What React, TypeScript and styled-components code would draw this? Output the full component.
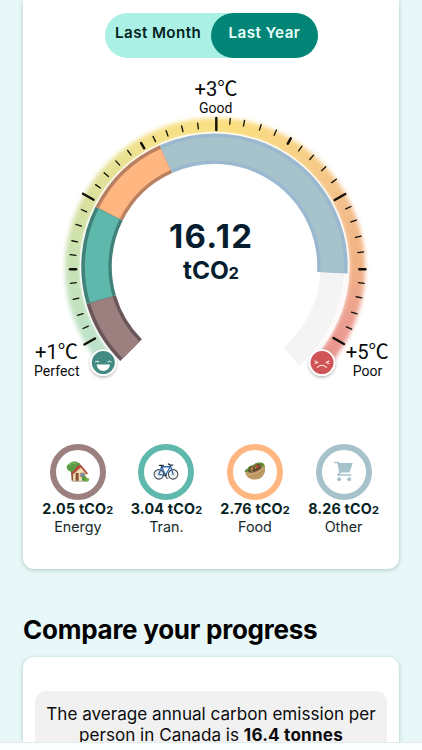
import React from 'react';
import styled, { createGlobalStyle } from 'styled-components';

const GlobalStyle = createGlobalStyle`
  * { box-sizing: border-box; }
  body { margin: 0; background: #e8f7f7; font-family: Inter, sans-serif; }
`;

const Page = styled.main`
  width: 422px;
  height: 750px;
  overflow: hidden;
  display: flex;
  flex-direction: column;
  background: #e8f7f7;
`;

const Content = styled.div`
  flex: 1;
  min-height: 0;
  overflow: hidden;
  padding: 0 23px;
`;

const Card = styled.section<{ $continued?: boolean }>`
  width: 376px;
  background: #fff;
  border-radius: ${(p) => (p.$continued ? '0 0 11px 11px' : '11px')};
  box-shadow: 0 1px 4px rgba(20, 60, 60, 0.26);
`;

const SummaryCard = styled(Card)`
  height: 569px;
  padding-top: 13px;
  display: flex;
  flex-direction: column;
`;

const Toggle = styled.div`
  width: 212.5px;
  height: 45px;
  margin-left: 82px;
  display: flex;
  border-radius: 23px;
  background: #abf0e5;
`;

const ToggleOption = styled.button<{ $active?: boolean }>`
  width: 106.25px;
  height: 45px;
  padding: 0 0 5px;
  border: 0;
  border-radius: 23px;
  background: ${(p) => (p.$active ? '#028576' : 'transparent')};
  color: ${(p) => (p.$active ? '#e9fffb' : '#04231f')};
  font: 600 15.2px/20px Inter, sans-serif;
  letter-spacing: 0.4px;
  white-space: nowrap;
`;

const GaugeSvg = styled.svg`
  display: block;
  width: 376px;
  height: 342px;
  flex: none;
`;

const Legend = styled.div`
  display: grid;
  grid-template-columns: repeat(4, 88.6px);
  margin: 43.5px 0 0 10.5px;
`;

const LegendItem = styled.div`
  display: flex;
  flex-direction: column;
  align-items: center;
`;

const Ring = styled.div<{ $color: string }>`
  width: 56px;
  height: 56px;
  border: 6px solid ${(p) => p.$color};
  border-radius: 50%;
  display: flex;
  align-items: center;
  justify-content: center;
`;

const Amount = styled.div`
  font: 700 14.3px/18px Inter, sans-serif;
  letter-spacing: 0.2px;
  color: #06221f;
  white-space: nowrap;
  small { font-size: 11px; letter-spacing: 0; }
`;

const Caption = styled.div`
  font: 400 14.3px/18px Inter, sans-serif;
  margin-top: -1px;
  color: #14292a;
`;

const Heading = styled.h2`
  margin: 44px 0 10px;
  height: 34px;
  font: 700 26px/34px Inter, sans-serif;
  letter-spacing: -0.25px;
  color: #000;
  white-space: nowrap;
`;

const CompareCard = styled(Card)`
  height: 200px;
  padding: 34px 12px 0;
`;

const Notice = styled.p`
  margin: 0;
  height: 120px;
  padding-top: 12px;
  border-radius: 11px;
  background: #f1f1f1;
  color: #0b0b0b;
  text-align: center;
  font: 400 17.1px/21px Inter, sans-serif;
  white-space: nowrap;
  b { letter-spacing: 0.2px; }
`;

const BottomBar = styled.footer`
  height: 8px;
  flex: none;
  border-top: 1px solid #e3ecec;
  background: #fafefe;
`;

const CX = 214.5;
const CY = 266.7;

const polar = (cx: number, cy: number, r: number, deg: number) => {
  const a = ((deg - 90) * Math.PI) / 180;
  return [cx + r * Math.cos(a), cy + r * Math.sin(a)];
};

const arc = (cx: number, cy: number, r: number, from: number, to: number) => {
  const [x1, y1] = polar(cx, cy, r, from);
  const [x2, y2] = polar(cx, cy, r, to);
  return `M${x1} ${y1}A${r} ${r} 0 ${to - from > 180 ? 1 : 0} 1 ${x2} ${y2}`;
};

const segments = [
  { from: -135, to: -106.2, fill: '#9c8080', edge: '#6b5759' },
  { from: -106.2, to: -63.3, fill: '#5eb8ab', edge: '#40827a' },
  { from: -63.3, to: -24.3, fill: '#ffb681', edge: '#b98161' },
  { from: -24.3, to: 92.9, fill: '#a6c2ca', edge: '#9ab8cf' },
];

const glowStops: [number, number[]][] = [
  [-132, [186, 226, 208]],
  [-90, [198, 226, 182]],
  [-60, [219, 225, 158]],
  [-25, [244, 225, 138]],
  [5, [251, 223, 128]],
  [35, [247, 210, 134]],
  [65, [243, 190, 138]],
  [90, [241, 177, 132]],
  [110, [236, 160, 144]],
  [132, [232, 145, 142]],
];

const glowColor = (deg: number) => {
  let i = 0;
  while (i < glowStops.length - 2 && glowStops[i + 1][0] < deg) i++;
  const [a, ca] = glowStops[i];
  const [b, cb] = glowStops[i + 1];
  const t = Math.max(0, Math.min(1, (deg - a) / (b - a)));
  return `rgb(${ca.map((v, k) => Math.round(v + (cb[k] - v) * t)).join(',')})`;
};

const glowSlices = Array.from({ length: 131 }, (_, i) => -131 + i * 2);

type Tick = [number, number, ('major' | 'mid')?];
const ticks: Tick[] = [
  [89.7, 341.5, 'major'], [85.7, 327.3], [80.3, 314.5], [76, 298.7], [73.3, 283],
  [73, 269.3, 'mid'], [73, 255], [74.7, 241.3], [78.7, 225.3], [84, 210.7],
  [88.3, 196.7, 'major'], [98, 186.3], [106.3, 174.7], [117.7, 163], [129.3, 152.7],
  [142.7, 145.7, 'mid'], [154.3, 139], [167, 133.3], [182.3, 128.7], [198, 126],
  [216.3, 124, 'major'], [230, 121.3], [244, 123.3], [260.3, 127.3], [275.3, 132.7],
  [289.3, 141, 'mid'], [300.3, 148.5], [311.7, 157.3], [323.7, 168.7], [334, 180.9],
  [340, 197, 'major'], [348.4, 207.7], [353.7, 221], [358.3, 236.7], [360.7, 252.3],
  [362.3, 269.3, 'mid'], [361.3, 283], [359, 297.3], [354.3, 313], [349, 328],
  [338.7, 341, 'major'],
];

const tickSize = { major: [12.2, 2.4], mid: [6, 2.5], minor: [5.8, 1.3] };

const TickMark = ({ tick: [x, y, kind] }: { tick: Tick }) => {
  const [length, width] = tickSize[kind ?? 'minor'];
  const d = Math.hypot(x - 216.3, y - 269.3);
  const ux = (((x - 216.3) / d) * length) / 2;
  const uy = (((y - 269.3) / d) * length) / 2;
  return <line x1={x - ux} y1={y - uy} x2={x + ux} y2={y + uy} stroke="#111008" strokeWidth={width} strokeLinecap="round" />;
};

const Gauge = () => (
  <GaugeSvg viewBox="23 58 376 342" role="img" aria-label="16.12 tCO2">
    <defs>
      <filter id="glow" x="-10%" y="-10%" width="120%" height="120%">
        <feGaussianBlur stdDeviation="2.2" />
      </filter>
      <filter id="drop" x="-40%" y="-40%" width="180%" height="180%">
        <feDropShadow dx="0" dy="1.5" stdDeviation="1.5" floodColor="#000" floodOpacity="0.3" />
      </filter>
    </defs>
    <g filter="url(#glow)">
      {glowSlices.map((a) => (
        <path key={a} d={arc(215, 268, 142, a - 1.3, a + 1.3)} fill="none" stroke={glowColor(a)} strokeWidth="16" />
      ))}
    </g>
    <path d={arc(CX, CY, 133.8, -135, 135)} fill="none" stroke="#fff" strokeOpacity="0.8" strokeWidth="2.4" />
    <path d={arc(CX, CY, 118, 92, 139.5)} fill="none" stroke="#f4f4f4" strokeWidth="24" />
    {segments.map((s) => (
      <g key={s.from} fill="none">
        <path d={arc(CX, CY, 118, s.from, s.to)} stroke={s.edge} strokeWidth="30.5" />
        <path d={arc(CX, CY, 117.9, s.from + (s.from === -135 ? 0 : 0.2), s.to - 0.2)} stroke={s.fill} strokeWidth="23.5" />
      </g>
    ))}
    {ticks.map((t) => <TickMark key={`${t[0]}-${t[1]}`} tick={t} />)}

    <g filter="url(#drop)">
      <circle cx="103.3" cy="362.6" r="13.3" fill="#fff" />
      <circle cx="322" cy="362.6" r="13.3" fill="#fff" />
    </g>
    <circle cx="103.3" cy="362.6" r="11.5" fill="#438b82" />
    <path d="M96.7 364.6h13.2c-.3 4-3 6.3-6.6 6.3s-6.3-2.3-6.6-6.3z" fill="#fff" />
    <path d="M95.4 361.8q1.6-1.6 3.4 0M107.8 361.8q1.6-1.6 3.4 0" fill="none" stroke="#e9fffb" strokeWidth="1" strokeLinecap="round" />
    <circle cx="322" cy="362.6" r="11.5" fill="#d05456" />
    <path d="M317.4 367.3q4.4-4 9 0M315 361l2.8 1.5-2.8 1M329 361l-2.8 1.5 2.8 1" fill="none" stroke="#ffe9e5" strokeWidth="1.1" strokeLinecap="round" strokeLinejoin="round" />

    <g fill="#0a0a0a" fontFamily="Roboto, 'Noto Sans CJK JP', sans-serif">
      <text x="194.5" y="95.7" fontSize="20" textLength="43" lengthAdjust="spacingAndGlyphs">+3℃</text>
      <text x="199" y="112.8" fontSize="14" textLength="33.5">Good</text>
      <text x="35" y="359" fontSize="20" textLength="43" lengthAdjust="spacingAndGlyphs">+1℃</text>
      <text x="34" y="376.3" fontSize="14" textLength="45.5">Perfect</text>
      <text x="345.7" y="359" fontSize="20" textLength="43" lengthAdjust="spacingAndGlyphs">+5℃</text>
      <text x="352.8" y="376.3" fontSize="14" textLength="29.5">Poor</text>
    </g>
    <g fill="#061d30" fontFamily="Inter, sans-serif" fontWeight="700">
      <text x="169" y="247.5" fontSize="33" textLength="83">16.12</text>
      <text x="183" y="279.3" fontSize="24.5" textLength="46" lengthAdjust="spacingAndGlyphs">tCO</text>
      <text x="228.4" y="279.3" fontSize="16.5">2</text>
    </g>
  </GaugeSvg>
);

const HouseIcon = () => (
  <svg width="25" height="24" viewBox="0 0 26 24">
    <path d="M6 10h3v11H7z" fill="#8a5838" />
    <path d="M2 8C1 5 4 4 5 3c2-3 7-2 8-1 3 0 4 3 3 5 0 2-3 3-4 3-3 3-9 2-10-2z" fill="#589b42" />
    <path d="M4 5q4-4 8-1" stroke="#7fb95a" strokeWidth="1.3" fill="none" />
    <path d="M8.5 11.5 15 6l7.5 6v9.5h-14z" fill="#f3dfb4" />
    <path d="m7.2 12.7 6-7.6 3.6-.3 7.2 8.8-1.5 1-6-7.4-7.6 7z" fill="#b34e40" />
    <path d="M11 13h3.2v8.5H11z" fill="#8a4e36" />
    <path d="M16 13h4.5v4.2H16z" fill="#718fae" stroke="#b78960" strokeWidth=".7" />
    <path d="M7.5 21h16v1h-16z" fill="#aaa18a" />
    <circle cx="20" cy="19" r="2.5" fill="#4f993b" /><circle cx="23" cy="20" r="2" fill="#73ad4e" />
  </svg>
);

const BicycleIcon = () => (
  <svg width="26" height="19" viewBox="0 0 27 20" fill="none">
    <g stroke="#40484f" strokeWidth="1.15">
      <circle cx="6" cy="13" r="5" /><circle cx="21" cy="13" r="5" />
    </g>
    <path d="M2.5 9.5l7 7m0-7-7 7M17.5 9.5l7 7m0-7-7 7M6 8v10M21 8v10M1 13h10M16 13h10" stroke="#8b9299" strokeWidth=".35" />
    <path d="m6 13 3-8h9l-5 9-4-9M6 13l7 1M18 3l3 10" stroke="#3469ab" strokeWidth="1.4" strokeLinejoin="round" />
    <path d="M6.5 3.5h4.3M8.7 3.5V5M16 2l2 1.2h2.6" stroke="#31383e" strokeWidth="1.4" strokeLinecap="round" />
    <circle cx="13" cy="14" r="1.5" fill="#414954" /><path d="M13 14l1 3h2" stroke="#414954" />
  </svg>
);

const FoodIcon = () => (
  <svg width="22" height="20" viewBox="0 0 22 20">
    <path d="M1 10C0 8 3 7 4 6c1-3 4-2 5-3 3-3 9-3 11-1l1 3-8 8z" fill="#5f8f3c" />
    <path d="M4 9l2-4 4-1 4-2 4 1-2 5-8 4z" fill="#674431" />
    <circle cx="13" cy="4.5" r="1.8" fill="#b64c38" /><circle cx="8" cy="6.5" r="1.3" fill="#c58e4d" />
    <path d="M16 3l2 2M6 8l3 2M10 4l2 3" stroke="#94a446" strokeWidth="1" />
    <path d="M1.2 10C8 12 16 9 20.4 3c2.4 7-1.4 14.3-9.2 14.5C6 17.8 2 15 1.2 10z" fill="#bd9761" />
    <path d="M2.5 12.5c7 1 13-2 17.5-7.5" stroke="#d5b17c" strokeWidth=".9" fill="none" />
  </svg>
);

const CartIcon = () => (
  <svg width="20" height="22" viewBox="0 0 20 22">
    <path d="M1 1.5h3.2L6 11.5l-2 2.5h12.5" fill="none" stroke="#a6c2ca" strokeWidth="1.7" strokeLinejoin="round" strokeLinecap="round" />
    <path d="M3.5 2h15.3l-3 8.8c-.2.6-.6.8-1.2.8H5.5z" fill="#a6c2ca" />
    <circle cx="5.1" cy="18.3" r="2" fill="#a6c2ca" /><circle cx="15.2" cy="18.3" r="2" fill="#a6c2ca" />
  </svg>
);

const categories = [
  { label: 'Energy', amount: '2.05', color: '#9c8080', icon: <HouseIcon /> },
  { label: 'Tran.', amount: '3.04', color: '#5eb8ab', icon: <BicycleIcon /> },
  { label: 'Food', amount: '2.76', color: '#ffb681', icon: <FoodIcon /> },
  { label: 'Other', amount: '8.26', color: '#a6c2ca', icon: <CartIcon /> },
];

export default function App() {
  return (
    <>
      <GlobalStyle />
      <Page>
        <Content>
          <SummaryCard $continued>
            <Toggle>
              <ToggleOption>Last Month</ToggleOption>
              <ToggleOption $active>Last Year</ToggleOption>
            </Toggle>
            <Gauge />
            <Legend>
              {categories.map((c) => (
                <LegendItem key={c.label}>
                  <Ring $color={c.color}>{c.icon}</Ring>
                  <Amount>{c.amount} tCO<small>2</small></Amount>
                  <Caption>{c.label}</Caption>
                </LegendItem>
              ))}
            </Legend>
          </SummaryCard>
          <Heading>Compare your progress</Heading>
          <CompareCard>
            <Notice>
              The average annual carbon emission per<br />
              person in Canada is <b>16.4 tonnes</b>
            </Notice>
          </CompareCard>
        </Content>
        <BottomBar />
      </Page>
    </>
  );
}
